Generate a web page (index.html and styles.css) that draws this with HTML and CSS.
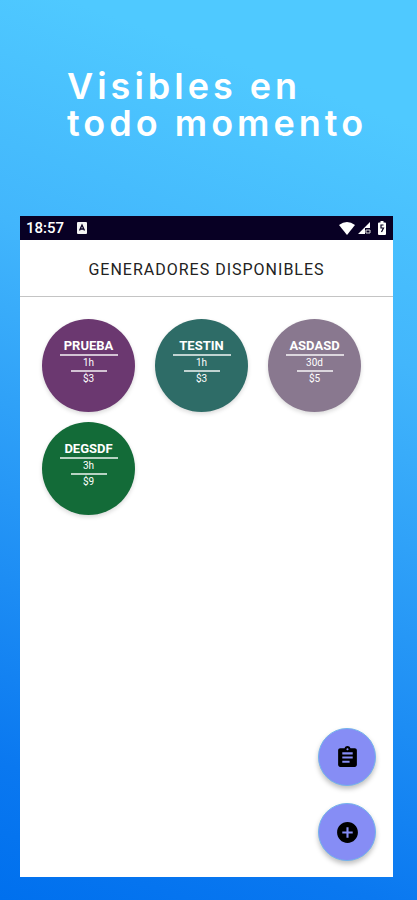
FILE: index.html
```
<!doctype html>
<html lang="es">
	<head>
		<meta charset="utf-8">
		<meta name="viewport" content="width=device-width, initial-scale=1">
		<title>Generadores disponibles</title>
		<link rel="stylesheet" href="styles.css">
	</head>
	<body>
		<h1 class="slogan">Visibles en<br>todo momento</h1>

		<div class="phone">
			<div class="statusbar">
				<span class="clock">18:57</span>
				<svg class="app" width="10" height="12" viewBox="0 0 10 12"><rect width="10" height="12" rx="1" fill="#f4f4f4"/><path d="M2.500 8.500 5 3l2.500 5.500M3.500 7h3" fill="none" stroke="#080024" stroke-width="1.300"/></svg>
				<svg width="16" height="13" viewBox="0 0 16 13"><path d="M0 3Q8-3 16 3L8 13z" fill="#fff"/></svg>
				<svg width="13" height="12" viewBox="0 0 13 12"><path d="M12 0v6H7v6H0z" fill="#fff"/><path d="M8 8h4v3H8z" fill="none" stroke="#ddd"/></svg>
				<svg class="battery" width="8" height="14" viewBox="0 0 8 14"><path d="M2.500 0h3v1.500H7q1 0 1 1V13q0 1-1 1H1q-1 0-1-1V2.500q0-1 1-1h1.500z" fill="#fff"/><path d="M5.500 4H3v3h2.500L3.500 11" fill="none" stroke="#080024" stroke-width="1.200"/></svg>
			</div>

			<h2 class="title">GENERADORES DISPONIBLES</h2>

			<div class="generators">
				<button class="generator purple">
					<b class="name">PRUEBA</b>
					<span class="time">1h</span>
					<span class="price">$3</span>
				</button>
				<button class="generator teal">
					<b class="name">TESTIN</b>
					<span class="time">1h</span>
					<span class="price">$3</span>
				</button>
				<button class="generator mauve">
					<b class="name">ASDASD</b>
					<span class="time">30d</span>
					<span class="price">$5</span>
				</button>
				<button class="generator green">
					<b class="name">DEGSDF</b>
					<span class="time">3h</span>
					<span class="price">$9</span>
				</button>
			</div>

			<div class="actions">
				<button class="fab" aria-label="Registro">
					<svg width="25" height="25" viewBox="0 0 24 24"><path d="M19 3h-4.180C14.400 1.840 13.300 1 12 1c-1.300 0-2.400.84-2.820 2H5c-1.100 0-2 .9-2 2v14c0 1.100.9 2 2 2h14c1.100 0 2-.9 2-2V5c0-1.100-.9-2-2-2zm-7 0c.55 0 1 .45 1 1s-.45 1-1 1-1-.45-1-1 .45-1 1-1zm2 14H7v-2h7v2zm3-4H7v-2h10v2zm0-4H7V7h10v2z"/></svg>
				</button>
				<button class="fab" aria-label="Agregar">
					<svg width="25" height="25" viewBox="0 0 24 24"><path d="M12 2C6.480 2 2 6.480 2 12s4.480 10 10 10 10-4.480 10-10S17.520 2 12 2zm5 11h-4v4h-2v-4H7v-2h4V7h2v4h4v2z"/></svg>
				</button>
			</div>
		</div>
	</body>
</html>
```

FILE: styles.css
```
* { box-sizing: border-box; }

body {
	margin: 0;
	min-height: 100vh;
	padding: 68px 24px 23px 20px;
	display: flex;
	flex-direction: column;
	background: linear-gradient(200deg, #4fc9ff 12%, #42b6fc 35%, #0a78f0 87%, #0070ee);
	font-family: Roboto, "Liberation Sans", sans-serif;
}

.slogan {
	margin: 0 0 74px 47px;
	color: white;
	font-family: Inter, "Liberation Sans", sans-serif;
	font-size: 36px;
	font-weight: 600;
	line-height: 37px;
	letter-spacing: 4px;
	white-space: nowrap;
}

.phone {
	flex: 1;
	display: flex;
	flex-direction: column;
	background: white;
}

.statusbar {
	display: flex;
	align-items: center;
	gap: 3px;
	height: 24px;
	padding: 0 7px 0 6px;
	background: #080024;
	color: white;
}

.clock {
	font-size: 15px;
	font-weight: 500;
}

.app { margin: 0 auto 0 10px; }
.battery { margin-left: 4px; }

.title {
	margin: 0;
	padding: 20px 0 16px;
	border-bottom: 1px solid #c4c4c4;
	color: #222;
	font-size: 16px;
	font-weight: 400;
	line-height: 20px;
	letter-spacing: 1px;
	text-align: center;
}

.generators {
	display: flex;
	flex-wrap: wrap;
	gap: 10px 20px;
	padding: 22px 22px 20px;
}

.generator {
	display: flex;
	flex-direction: column;
	align-items: center;
	width: 93px;
	height: 93px;
	padding: 19px 0 0;
	border: 0;
	border-radius: 50%;
	color: white;
	font-family: inherit;
	font-size: 10px;
	line-height: 14px;
	box-shadow: 0 2px 4px rgba(0, 0, 0, .15);
}

.purple { background: #6b3870; }
.teal { background: #2e6c67; }
.mauve { background: #89788f; }
.green { background: #136b38; }

.name {
	width: 58px;
	border-bottom: 2px solid rgba(255, 255, 255, .7);
	font-size: 13px;
	line-height: 16px;
}

.time {
	width: 36px;
	border-bottom: 2px solid rgba(255, 255, 255, .7);
}

.actions {
	display: flex;
	flex-direction: column;
	gap: 17px;
	margin: auto 17px 16px auto;
}

.fab {
	display: flex;
	align-items: center;
	justify-content: center;
	width: 58px;
	height: 58px;
	padding: 0;
	border: 1px solid #74b4ec;
	border-radius: 50%;
	background: #868df5;
	box-shadow: 0 3px 5px rgba(0, 0, 0, .25);
}
```
